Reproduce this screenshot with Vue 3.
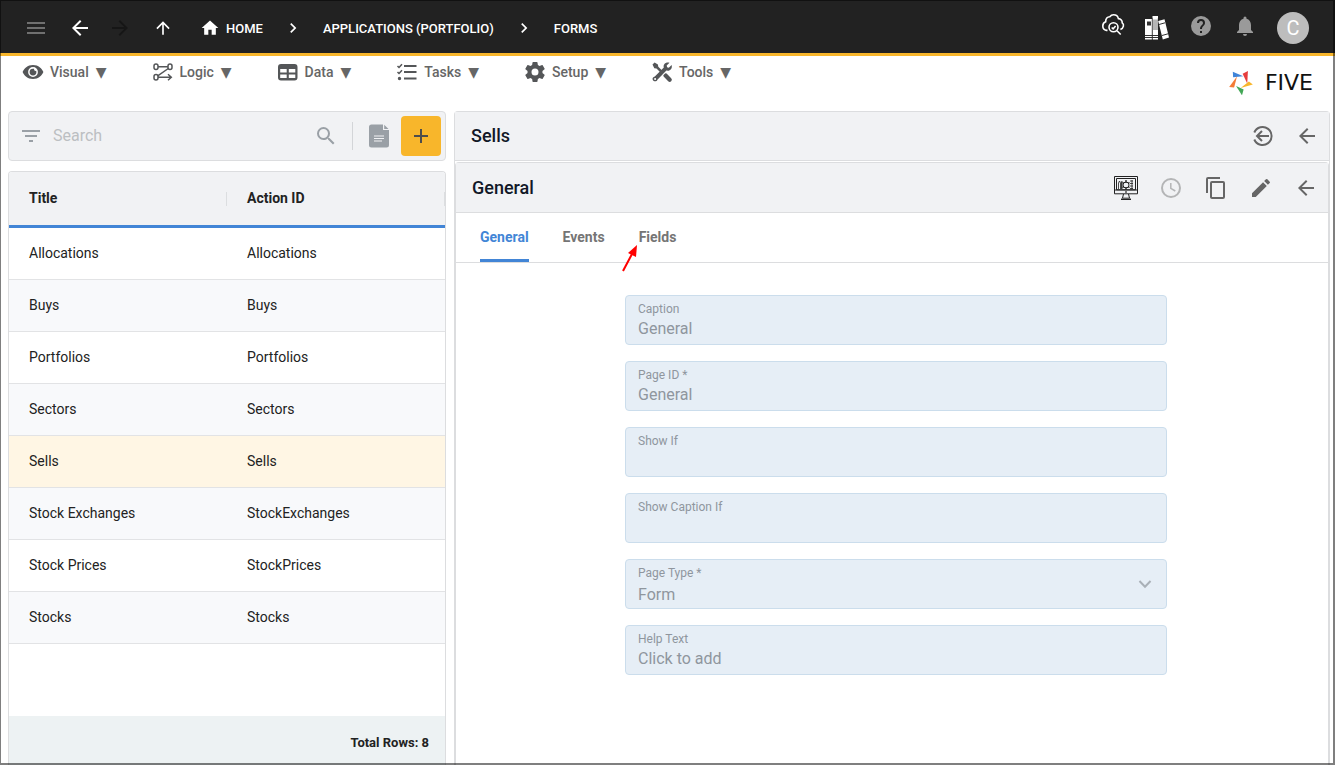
<script setup>
import { ref } from 'vue'

const menus = [
  { name: 'Visual', icon: 'eye' },
  { name: 'Logic', icon: 'logic' },
  { name: 'Data', icon: 'data' },
  { name: 'Tasks', icon: 'tasks' },
  { name: 'Setup', icon: 'gear' },
  { name: 'Tools', icon: 'tools' },
]

const rows = [
  ['Allocations', 'Allocations'],
  ['Buys', 'Buys'],
  ['Portfolios', 'Portfolios'],
  ['Sectors', 'Sectors'],
  ['Sells', 'Sells'],
  ['Stock Exchanges', 'StockExchanges'],
  ['Stock Prices', 'StockPrices'],
  ['Stocks', 'Stocks'],
]
const selected = ref('Sells')

const tabs = ['General', 'Events', 'Fields']
const activeTab = ref('General')

const fields = [
  { id: 'caption', label: 'Caption', value: 'General' },
  { id: 'page-id', label: 'Page ID *', value: 'General' },
  { id: 'show-if', label: 'Show If', value: '' },
  { id: 'show-caption-if', label: 'Show Caption If', value: '' },
  { id: 'page-type', label: 'Page Type *', value: 'Form', select: true },
  { id: 'help-text', label: 'Help Text', value: 'Click to add' },
]
const search = ref('')
</script>

<template>
  <div class="app">
    <header class="topbar">
      <button class="icon-btn faded" aria-label="Menu">
        <svg viewBox="0 0 24 24" width="24" height="24"><path d="M3 18h18v-2H3v2zm0-5h18v-2H3v2zm0-7v2h18V6H3z" /></svg>
      </button>
      <button class="icon-btn back" aria-label="Back">
        <svg viewBox="0 0 24 24" width="24" height="24"><path d="M20 11H7.800l5.600-5.600L12 4l-8 8 8 8 1.400-1.400L7.800 13H20z" /></svg>
      </button>
      <button class="icon-btn forward" aria-label="Forward">
        <svg viewBox="0 0 24 24" width="24" height="24"><path d="M4 13h12.200l-5.600 5.600L12 20l8-8-8-8-1.400 1.400 5.600 5.600H4z" /></svg>
      </button>
      <button class="icon-btn up" aria-label="Up">
        <svg viewBox="0 0 24 24" width="20" height="20"><path d="M13 20V7.800l5.600 5.600L20 12l-8-8-8 8 1.400 1.400L11 7.800V20z" /></svg>
      </button>
      <nav class="crumbs" aria-label="Breadcrumb">
        <a href="#home" class="crumb">
          <svg viewBox="0 0 24 24" width="20" height="20"><path d="M10 20v-6h4v6h5v-8h3L12 3 2 12h3v8z" /></svg>HOME</a>
        <svg class="sep" viewBox="0 0 24 24" width="20" height="20"><path d="M10 6 8.600 7.400l4.600 4.600-4.600 4.600L10 18l6-6z" /></svg>
        <a href="#applications" class="crumb">APPLICATIONS (PORTFOLIO)</a>
        <svg class="sep" viewBox="0 0 24 24" width="20" height="20"><path d="M10 6 8.600 7.400l4.600 4.600-4.600 4.600L10 18l6-6z" /></svg>
        <a href="#forms" class="crumb">FORMS</a>
      </nav>
      <div class="top-actions">
        <button class="icon-btn" aria-label="Inspect cloud">
          <svg class="line" viewBox="0 0 24 24" width="24" height="24" stroke-width="1.600">
            <path d="M6.500 16.400H5.500C3.200 16 1.800 14.300 1.800 12c0-2 1.200-3.600 2.900-4.200C4.400 4.500 6.500 2.600 8.800 2.700c1-1.300 2.200-1.900 3.700-1.900 2.400 0 4.400 1.500 4.900 3.800 2.400.1 4 2 3.800 4.200 1.200.8 1.500 2.100 1.200 3.400-.3 1.600-1.300 2.700-3 3.400" />
            <circle cx="12.500" cy="13.300" r="4.500" />
            <path d="m10.700 13.500 1.400 1.400 2.500-3M16 16.800l3.700 3.700" />
          </svg>
        </button>
        <button class="icon-btn books" aria-label="Library">
          <svg viewBox="0 0 24 24" width="24" height="24">
            <path d="M0 3h7v20.500H0zM7.500 0H13v23.500H7.500zM13.200 5l6.300-1.700L24 21.500 17.800 23.500z" />
            <path d="M0 19.500h13M0 21.500h13M14 8.500l6-1.700M17 19.500l6-1.700" stroke="#333" stroke-width="1" fill="none" />
            <path d="M2 5.500h4v4H2z" fill="#333" />
            <path d="M7.500 3.500H13V14H7.500z" fill="#b5b5b5" />
            <path d="M7.200 2v22M13.300 2v3" stroke="#222" stroke-width=".6" />
          </svg>
        </button>
        <button class="icon-btn muted" aria-label="Help">
          <svg viewBox="0 0 24 24" width="24" height="24"><path d="M12 2a10 10 0 1 0 0 20 10 10 0 0 0 0-20zm1 17h-2v-2h2v2zm2.070-7.750-.9.920C13.450 12.900 13 13.500 13 15h-2v-.5c0-1.100.450-2.100 1.170-2.830l1.240-1.260c.370-.360.590-.860.590-1.410a2 2 0 0 0-4 0H8a4 4 0 0 1 8 0c0 .880-.360 1.680-.930 2.250z" /></svg>
        </button>
        <button class="icon-btn muted" aria-label="Notifications">
          <svg viewBox="0 0 24 24" width="24" height="24"><path d="M12 22a2 2 0 0 0 2-2h-4a2 2 0 0 0 2 2zm6-6v-5c0-3.070-1.640-5.640-4.500-6.320V4a1.500 1.500 0 0 0-3 0v.680C7.630 5.360 6 7.920 6 11v5l-2 2v1h16v-1z" /></svg>
        </button>
        <button class="avatar" aria-label="Account">C</button>
      </div>
    </header>

    <div class="menubar">
      <nav class="menus" aria-label="Main">
        <button v-for="m in menus" :key="m.name" class="menu">
          <svg v-if="m.icon === 'eye'" viewBox="0 0 22 22" width="22" height="22">
            <path fill-rule="evenodd" d="M11 4C5.500 4 2 7.500.600 11 2 14.500 5.500 18 11 18s9-3.500 10.400-7C20 7.500 16.500 4 11 4zm0 2.100a4.900 4.900 0 1 1 0 9.800 4.900 4.900 0 0 1 0-9.800z" />
            <path d="M11 7.700a3.400 3.400 0 1 0 3.400 3.400 3.400 3.400 0 0 0-.3-1.300 1.600 1.600 0 0 1-2-2 3.400 3.400 0 0 0-1.100-.1z" />
          </svg>
          <svg v-else-if="m.icon === 'logic'" class="line" viewBox="0 0 22 22" width="22" height="22" stroke-width="1.500">
            <rect x="2" y="3" width="4" height="5.500" rx="2" /><rect x="16" y="3" width="4" height="5.500" rx="2" /><rect x="2" y="13.500" width="4" height="5.500" rx="2" />
            <path d="M6 5.700h10M16.300 7.500 5.700 14.800M6 16.300h13M16 13.300l3.300 3-3.300 3" />
          </svg>
          <svg v-else-if="m.icon === 'data'" viewBox="0 0 22 22" width="22" height="22">
            <path fill-rule="evenodd" d="M4 3h13.500A3 3 0 0 1 20.500 6v10.500a3 3 0 0 1-3 3H4a3 3 0 0 1-3-3V6a3 3 0 0 1 3-3zM3.200 8v3.500h6.500V8zm8.600 0v3.500h6.500V8zm-8.600 5.500v3.500h6.500v-3.500zm8.600 0v3.500h6.500v-3.500z" />
          </svg>
          <svg v-else-if="m.icon === 'tasks'" class="line" viewBox="0 0 22 22" width="22" height="22" stroke-width="2.200">
            <path d="M8 5h12.500M8 11h12.500M8 17.500h12.500" />
            <path d="m1.500 5 1.500 1.500 3-3.300M1.500 11l1.500 1.500 3-3.300" stroke-width="1.500" />
            <circle cx="3.500" cy="17.500" r=".9" stroke-width="1.600" />
          </svg>
          <svg v-else-if="m.icon === 'gear'" viewBox="1 1 22 22" width="22" height="22">
            <path d="M19.430 12.980c.040-.320.070-.640.070-.980s-.030-.660-.070-.980l2.110-1.650a.5.5 0 0 0 .120-.640l-2-3.460a.5.5 0 0 0-.610-.220l-2.490 1a7.300 7.300 0 0 0-1.690-.980l-.380-2.650A.49.49 0 0 0 14 2h-4a.49.49 0 0 0-.490.420l-.380 2.650c-.610.250-1.170.590-1.690.980l-2.490-1a.49.49 0 0 0-.610.220l-2 3.460a.49.49 0 0 0 .120.640l2.110 1.650c-.040.320-.070.650-.070.980s.030.660.070.980l-2.110 1.650a.5.5 0 0 0-.120.640l2 3.460c.120.220.390.300.610.220l2.490-1c.520.400 1.080.730 1.690.980l.380 2.650c.030.240.240.420.490.420h4c.250 0 .460-.180.490-.420l.380-2.650c.610-.250 1.170-.590 1.690-.980l2.490 1c.230.090.490 0 .610-.220l2-3.460a.5.5 0 0 0-.120-.640l-2.110-1.650zM12 15.500a3.500 3.500 0 1 1 0-7 3.500 3.500 0 0 1 0 7z" />
          </svg>
          <svg v-else viewBox="0 0 22 22" width="22" height="22">
            <path d="M1.500 3.600 3.600 1.500l3.300 2 .4 2.300 4 4-1.800 1.800-4-4-2.200-.4z" />
            <path d="m12.300 14.300 2-2 1.300.3 4.600 4.600a2.100 2.100 0 0 1-3 3l-4.600-4.600z" />
            <path fill-rule="evenodd" d="M18.500 1.800 15.700 4.600l.4 1.700 1.700.4 2.800-2.800c1.100 3.300-1.500 6.600-5.200 5.700L6.400 18.700c-.5 2-3.600 2.300-4.600.4-.8-1.700.4-3 2-3.500l9-9c-1-3.600 2.400-6.100 5.700-4.800zM4.100 17a1 1 0 1 0 0 2 1 1 0 0 0 0-2z" />
          </svg>
          <span>{{ m.name }}</span><span class="caret" aria-hidden="true">▼</span>
        </button>
      </nav>
      <a href="#five" class="brand">
        <svg viewBox="420 215 72 73" width="24" height="24">
          <path fill="#3f84d8" d="m431 217 32 14-31 3z" />
          <path fill="#e63d3d" d="m461 223 16-8-2 38z" />
          <path fill="#f8b62b" d="m480 247 12 9-37 11z" />
          <path fill="#43a757" d="m441 261 23 10-5 18z" />
          <path fill="#f47c36" d="m444 231-9 34-15-1z" />
        </svg>
        <span>FIVE</span>
      </a>
    </div>

    <main class="main">
      <section class="left">
        <div class="searchbar">
          <button class="icon-btn slate" aria-label="Filter">
            <svg viewBox="0 0 24 24" width="24" height="24"><path d="M10 18h4v-2h-4v2zM3 6v2h18V6H3zm3 7h12v-2H6v2z" /></svg>
          </button>
          <input v-model="search" class="search" type="text" placeholder="Search" aria-label="Search" />
          <button class="icon-btn slate" aria-label="Run search">
            <svg viewBox="0 0 24 24" width="24" height="24"><path d="M15.500 14h-.790l-.280-.270A6.470 6.470 0 0 0 16 9.500 6.500 6.500 0 1 0 9.500 16c1.610 0 3.090-.590 4.230-1.570l.270.280v.790l5 4.990L20.490 19l-4.990-5zm-6 0a4.500 4.500 0 1 1 0-9 4.500 4.500 0 0 1 0 9z" /></svg>
          </button>
          <span class="rule"></span>
          <button class="icon-btn slate doc" aria-label="Document">
            <svg viewBox="0 0 20 24" width="20" height="24">
              <path d="M3 .5h11V6h6v15a2.500 2.500 0 0 1-2.500 2.500h-15A2.500 2.500 0 0 1 0 21V3A2.500 2.500 0 0 1 2.500.5zM15.200.8 19.500 5h-4.300z" />
              <path d="M5 12h10M5 14.500h10M5 17h8" stroke="#f1f2f4" stroke-width="1.200" />
            </svg>
          </button>
          <button class="add" aria-label="Add">
            <svg viewBox="0 0 24 24" width="24" height="24"><path d="M19 13h-6v6h-2v-6H5v-2h6V5h2v6h6z" /></svg>
          </button>
        </div>

        <div class="grid-card">
          <table class="grid">
            <thead>
              <tr><th scope="col">Title</th><th scope="col">Action ID</th></tr>
            </thead>
            <tbody>
              <tr v-for="r in rows" :key="r[0]" :class="{ selected: r[0] === selected }" @click="selected = r[0]">
                <td>{{ r[0] }}</td><td>{{ r[1] }}</td>
              </tr>
            </tbody>
          </table>
          <footer class="total">Total Rows: {{ rows.length }}</footer>
        </div>
      </section>

      <section class="panel">
        <div class="panel-head">
          <h1>Sells</h1>
          <div class="actions">
            <button class="icon-btn" aria-label="Return">
              <svg class="line" viewBox="0 0 24 24" width="24" height="24" stroke-width="2">
                <path d="M3.300 8.500a9 9 0 1 1 0 7M18 12H6M11 7l-5 5 5 5" />
              </svg>
            </button>
            <button class="icon-btn" aria-label="Close Sells">
              <svg viewBox="0 0 24 24" width="24" height="24"><path d="M20 11H7.800l5.600-5.600L12 4l-8 8 8 8 1.400-1.400L7.800 13H20z" /></svg>
            </button>
          </div>
        </div>

        <div class="subpanel">
          <div class="panel-head">
            <h2>General</h2>
            <div class="actions">
              <button class="icon-btn ink" aria-label="Preview">
                <svg class="line" viewBox="0 0 24 24" width="24" height="24" stroke-width="1">
                  <path d="M.5.5h23v17.300H.5zM.5 14h23M2.500 2.500h19v11.300h-19zM9.500 18l-1 4.200h7l-1-4.200M7 23.500h10M8.500 22.200 7 23.500M15.500 22.200l1.500 1.300" />
                  <path d="M4.500 13V7l1-2 1 2v6M7.500 13V5.500M8 5v8M16 5h3M16 7.500h3M16 10h3M16 12.500h3M18 4v9" stroke-width=".8" />
                  <circle cx="12" cy="9" r="3" />
                  <path d="M12 4v3M12 11v2.500M8.500 6.500l1.500 1M15.500 6.500l-1.500 1M8.500 11.500l1.500-1M15.500 11.500l-1.500-1" stroke-width="1.300" />
                  <circle cx="12" cy="16" r=".5" />
                </svg>
              </button>
              <button class="icon-btn light" aria-label="History">
                <svg class="line" viewBox="0 0 24 24" width="24" height="24" stroke-width="2"><circle cx="12" cy="12" r="9" /><path d="M11.800 7v5.300l4.500 2.700" stroke-width="1.500" /></svg>
              </button>
              <button class="icon-btn" aria-label="Copy">
                <svg viewBox="0 0 24 24" width="24" height="24"><path d="M16 1H4a2 2 0 0 0-2 2v14h2V3h12V1zm3 4H8a2 2 0 0 0-2 2v14c0 1.100.9 2 2 2h11a2 2 0 0 0 2-2V7a2 2 0 0 0-2-2zm0 16H8V7h11v14z" /></svg>
              </button>
              <button class="icon-btn" aria-label="Edit">
                <svg viewBox="0 0 24 24" width="24" height="24"><path d="M3 17.250V21h3.750L17.810 9.940l-3.750-3.750L3 17.250zM20.710 7.040a1 1 0 0 0 0-1.410l-2.340-2.340a1 1 0 0 0-1.410 0l-1.830 1.830 3.750 3.750 1.830-1.830z" /></svg>
              </button>
              <button class="icon-btn" aria-label="Close General">
                <svg viewBox="0 0 24 24" width="24" height="24"><path d="M20 11H7.800l5.600-5.600L12 4l-8 8 8 8 1.400-1.400L7.800 13H20z" /></svg>
              </button>
            </div>
          </div>

          <div class="tabs" role="tablist">
            <button v-for="t in tabs" :key="t" role="tab" class="tab" :class="{ active: t === activeTab }"
              :aria-selected="t === activeTab" @click="activeTab = t">
              {{ t }}
              <svg v-if="t === 'Fields'" class="pointer" viewBox="0 0 18 28" width="18" height="28">
                <path d="M2 27 11 10" stroke="#f00" stroke-width="2" /><path d="m16 1-1 12-8-4z" fill="#f00" />
              </svg>
            </button>
          </div>

          <form class="form">
            <div v-for="f in fields" :key="f.id" class="field">
              <label :for="f.id">{{ f.label }}</label>
              <template v-if="f.select">
                <select :id="f.id" disabled><option>{{ f.value }}</option></select>
                <svg class="drop" viewBox="0 0 24 24" width="20" height="20"><path d="M17.800 7.600 12 13.400 6.200 7.600 4.500 9.400 12 17l7.500-7.600z" /></svg>
              </template>
              <input v-else :id="f.id" type="text" :value="f.value" disabled />
            </div>
          </form>
        </div>
      </section>
    </main>
    <div class="frame"></div>
  </div>
</template>

<style>
body { margin: 0; }
</style>

<style scoped>
.app {
  display: flex;
  flex-direction: column;
  min-height: 100vh;
  box-sizing: border-box;
  background: #fff;
  color: #222;
  font-family: Roboto, "Liberation Sans", sans-serif;
  font-size: 14px;
}
.app *, .app *::before { box-sizing: border-box; }
svg { display: block; flex: none; fill: currentColor; }
svg.line { fill: none; stroke: currentColor; }
button { padding: 0; border: 0; background: none; color: inherit; font: inherit; cursor: pointer; }
a { color: inherit; text-decoration: none; }
.frame {
  position: fixed;
  inset: 0;
  border: solid rgba(0, 0, 0, .5);
  border-width: 1px 2px 2px 1px;
  pointer-events: none;
}

.topbar {
  display: flex;
  align-items: center;
  height: 56px;
  padding: 3px 26px 0 24px;
  border-bottom: 3px solid #f8b62b;
  background: #222;
  color: #fff;
}
.faded { color: #707070; }
.muted { color: #9a9a9a; }
.back { margin-left: 20px; }
.forward { margin-left: 16px; color: #161616; }
.up { margin-left: 21px; }
.crumbs { display: flex; align-items: center; gap: 20px; margin-left: 27px; font-size: 13px; font-weight: 500; }
.crumb { display: flex; align-items: center; gap: 6px; }
.top-actions { display: flex; align-items: center; gap: 20px; height: 46px; margin-left: auto; padding-bottom: 4px; }
.books, .avatar { margin-top: 4px; }
.avatar { width: 32px; height: 32px; border-radius: 50%; background: #bdbdbd; font-size: 20px; }

.menubar { display: flex; justify-content: space-between; align-items: flex-start; height: 55px; padding: 4px 22px 0; }
.menus { display: flex; gap: 45px; color: #545658; }
.menu { display: flex; align-items: center; height: 24px; font-weight: 500; color: #545658; }
.menu span { margin-left: 6px; color: #666; }
.menu .caret { margin-left: 7px; font-family: "DejaVu Sans", sans-serif; font-size: 14px; line-height: 14px; }
.brand { display: flex; align-items: center; gap: 12px; margin-top: 11px; color: #111; font: 22px/24px "DejaVu Sans", sans-serif; }

.main { display: grid; grid-template-columns: 1fr 2fr; gap: 8px; flex: 1; padding: 0 5px 0 8px; }
.left { display: flex; flex-direction: column; gap: 10px; min-width: 0; }
.searchbar {
  display: flex;
  align-items: center;
  height: 50px;
  padding: 0 4px 0 10px;
  border: 1px solid #dcdddf;
  border-radius: 4px;
  background: #f1f2f4;
}
.slate { color: #9aa0a6; }
.search { flex: 1; min-width: 0; margin: 0 10px; padding: 0 0 2px; border: 0; outline: 0; background: none; font: 16px Roboto, sans-serif; color: #222; }
.search::placeholder { color: #bcbfc2; opacity: 1; }
.rule { width: 1px; height: 28px; margin: 0 16px 0 14px; background: #d3d5d8; }
.doc { margin-right: 12px; }
.add { display: flex; align-items: center; justify-content: center; width: 40px; height: 40px; border-radius: 4px; background: #f8b62b; color: #4d4d4d; }

.grid-card { display: flex; flex-direction: column; flex: 1; border: 1px solid #dcdddf; border-bottom: 0; border-radius: 4px 4px 0 0; overflow: hidden; }
.grid { width: 100%; border-collapse: separate; border-spacing: 0; table-layout: fixed; }
.grid th { position: relative; height: 56px; padding: 0 20px 2px; border-bottom: 3px solid #4285d6; background: #f1f2f4; text-align: left; font-weight: 700; }
.grid th::before { content: ""; position: absolute; top: 20px; right: -1px; width: 2px; height: 14px; background: #dcdee0; }
.grid td { height: 52px; padding: 0 20px 2px; border-bottom: 1px solid #e2e3e5; }
.grid tbody tr:nth-child(even) { background: #f8f9fb; }
.grid tbody tr.selected { background: #fff6e4; }
.total { margin-top: auto; padding: 19px 16px 15px; background: #edf2f3; text-align: right; font-size: 13px; font-weight: 700; line-height: 15px; }

.panel { display: flex; flex-direction: column; min-width: 0; border: 1px solid #dcdddf; border-bottom: 0; border-radius: 4px 4px 0 0; }
.panel-head { display: flex; align-items: center; justify-content: space-between; height: 49px; padding: 0 10px 0 16px; border-bottom: 1px solid #dcdddf; background: #f1f2f4; }
.panel-head h1, .panel-head h2 { margin: 0; color: #111827; font-size: 18px; font-weight: 500; line-height: 22px; }
.actions { display: flex; gap: 20px; color: #666; }
.ink { color: #222; }
.light { color: #b4b5b6; }
.subpanel { display: flex; flex-direction: column; flex: 1; margin-top: 1px; border: 1px solid #dcdddf; border-bottom: 0; border-radius: 4px 4px 0 0; }
.subpanel .panel-head { height: 50px; }
.subpanel .actions { gap: 21px; }
.tabs { display: flex; gap: 34px; height: 50px; padding: 0 24px; border-bottom: 1px solid #dcdddf; }
.tab { position: relative; border-bottom: 3px solid transparent; padding-top: 2px; font-weight: 700; color: #757575; }
.tab.active { border-color: #4285d6; color: #4285d6; }
.pointer { position: absolute; top: 31px; left: -18px; }

.form { display: flex; flex-direction: column; gap: 16px; width: 100%; max-width: 550px; margin: 0 auto; padding: 32px 0 32px 8px; }
.field { position: relative; display: flex; flex-direction: column; height: 50px; padding: 5px 12px 0; border: 1px solid #cbddec; border-radius: 4px; background: #e6eef6; color: #8f969e; }
.field label { font-size: 12px; line-height: 16px; }
.field input, .field select { width: 100%; height: 24px; padding: 0; border: 0; background: none; appearance: none; opacity: 1; color: #8f969e; font: 16px/24px Roboto, sans-serif; }
.field select { height: 26px; padding-top: 2px; }
.drop { position: absolute; right: 11px; top: 14px; color: #a9b0b7; }
</style>
